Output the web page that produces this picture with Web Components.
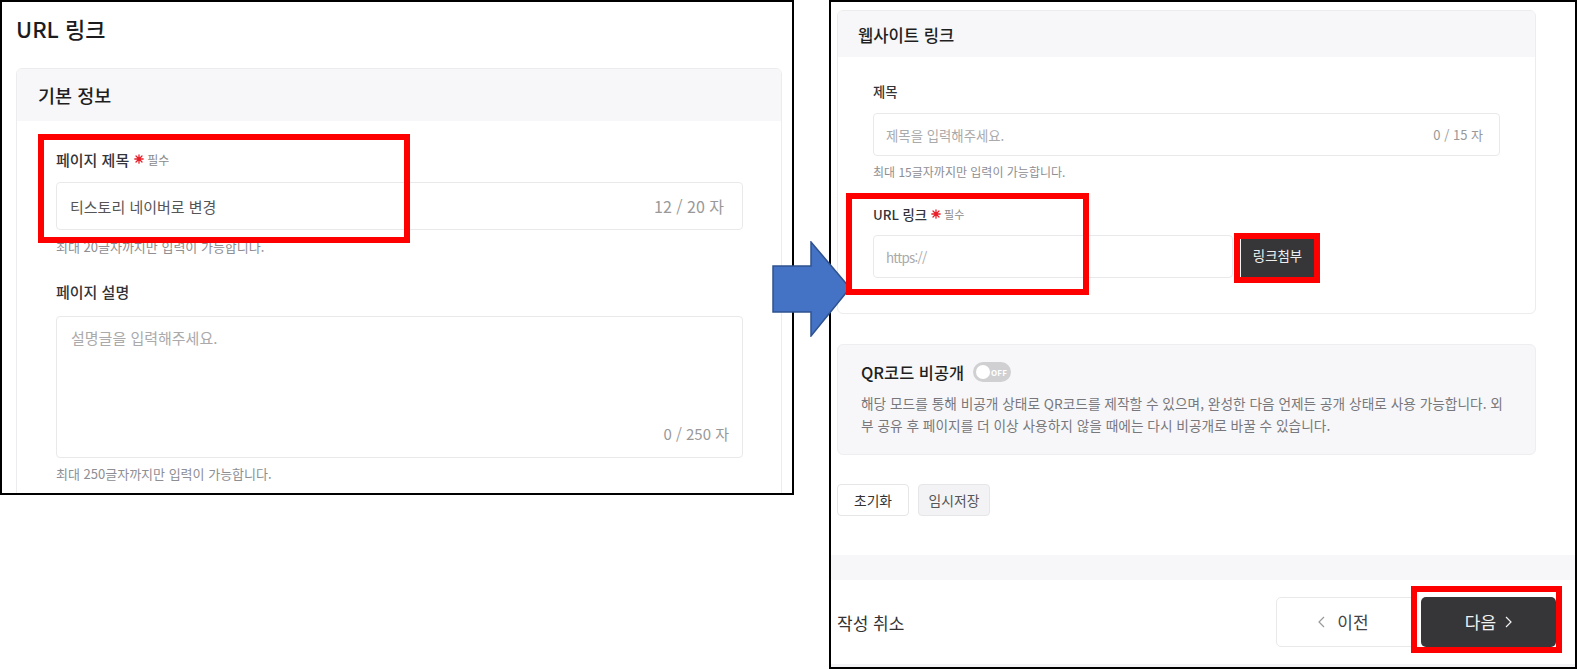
<!DOCTYPE html>
<html lang="ko"><head><meta charset="utf-8"><title>URL 링크</title>
<style>
html,body{margin:0;padding:0;background:#fff}
body{font-family:"Noto Sans CJK KR","Noto Sans",sans-serif;color:#333}
</style></head><body>
<x-canvas>
  <x-window style="--x:0px;--y:0px;--w:794px;--h:495px;--label:15px;--label-h:22px;--label-gap:12px;--text:15px;--hint:13px;--hint-gap:8px;--hint-h:18px;--req:12px;--req-ml:5px;">
    <x-page-title>URL 링크</x-page-title>
    <x-card heading="기본 정보" style="--mx:0 10px 0 14px;--head-h:52px;--head-size:18.5px;--head-pad:21px;--body-pad:27px 38px 20px 39px;--field-gap:24px;--mt:26px;">
      <x-field label="페이지 제목" required>
        <x-input value="티스토리 네이버로 변경" count="12 / 20 자" style="--h:48px;--cr:18px;--count:16px;"></x-input>
        <x-hint>최대 20글자까지만 입력이 가능합니다.</x-hint>
      </x-field>
      <x-field label="페이지 설명" style="--label-gap:14px;--hint-gap:7px;">
        <x-input multiline placeholder="설명글을 입력해주세요." count="0 / 250 자" style="--h:142px;--cr:13px;--count:15px;--mb:13px;"></x-input>
        <x-hint>최대 250글자까지만 입력이 가능합니다.</x-hint>
      </x-field>
    </x-card>
  </x-window>

  <x-window style="--x:829px;--y:0px;--w:748px;--h:669px;--label:13.3px;--label-h:20px;--label-gap:12px;--text:13.4px;--hint:12px;--hint-gap:8px;--hint-h:16px;--req:11px;--req-ml:4px;">
    <x-card heading="웹사이트 링크" style="--mx:0 39px 0 6px;--head-h:46px;--head-size:16.6px;--head-pad:20px;--head-pt:1px;--body-pad:24px 35px 35px 35px;--field-gap:24px;--mt:8px;">
      <x-field label="제목">
        <x-input placeholder="제목을 입력해주세요." count="0 / 15 자" style="--h:43px;--cr:16px;--pl:12px;"></x-input>
        <x-hint>최대 15글자까지만 입력이 가능합니다.</x-hint>
      </x-field>
      <x-field label="URL 링크" required style="--label-gap:11px;">
        <x-input-row>
          <x-input placeholder="https://" style="--h:43px;--pl:12px;--ph-track:-.8px;"></x-input>
          <x-btn variant="attach">링크첨부</x-btn>
        </x-input-row>
      </x-field>
    </x-card>
    <x-notice heading="QR코드 비공개">해당 모드를 통해 비공개 상태로 QR코드를 제작할 수 있으며, 완성한 다음 언제든 공개 상태로 사용 가능합니다. 외<br>부 공유 후 페이지를 더 이상 사용하지 않을 때에는 다시 비공개로 바꿀 수 있습니다.</x-notice>
    <x-actions>
      <x-btn variant="plain">초기화</x-btn>
      <x-btn variant="muted">임시저장</x-btn>
    </x-actions>
    <x-footer>
      <span slot="start">작성 취소</span>
      <x-btn variant="prev" slot="end" icon="left">이전</x-btn>
      <x-btn variant="next" slot="end" icon="right">다음</x-btn>
    </x-footer>
  </x-window>

  <x-arrow></x-arrow>
  <x-annot style="--x:38px;--y:134px;--w:372px;--h:109px;"></x-annot>
  <x-annot style="--x:846px;--y:193px;--w:243px;--h:102px;"></x-annot>
  <x-annot style="--x:1234px;--y:233px;--w:86px;--h:50px;"></x-annot>
  <x-annot style="--x:1411px;--y:586px;--w:151px;--h:67px;"></x-annot>
</x-canvas>

<script>
function def(name, html, init){
  customElements.define(name, class extends HTMLElement{
    constructor(){super();this.attachShadow({mode:'open'}).innerHTML=html;}
    connectedCallback(){ if(init) init.call(this,this.shadowRoot); }
  });
}
def('x-canvas',`<style>:host{display:block;position:relative;width:1577px;height:669px;overflow:hidden;background:#fff}</style><slot></slot>`);
def('x-window',`<style>:host{display:flex;flex-direction:column;position:absolute;left:var(--x);top:var(--y);width:var(--w);height:var(--h);box-sizing:border-box;border:2px solid #000;overflow:hidden;background:#fff}</style><slot></slot>`);
def('x-page-title',`<style>:host{display:block;margin:12px 0 0 14px;height:28px;line-height:28px;font-size:22px;font-weight:500;color:#1c1c1e}</style><slot></slot>`);
def('x-card',`<style>
:host{display:block;flex:none;margin:var(--mt) 0 0 0;box-sizing:border-box}
.c{margin:var(--mx);border:1px solid #ececee;border-radius:6px;overflow:hidden;background:#fff}
.h{box-sizing:border-box;height:var(--head-h);line-height:var(--head-h);padding-left:var(--head-pad);padding-top:var(--head-pt,0);background:#f7f7f9;font-size:var(--head-size);font-weight:500;color:#1f1f22}
.b{display:flex;flex-direction:column;gap:var(--field-gap);padding:var(--body-pad)}
</style><div class="c"><div class="h"></div><div class="b"><slot></slot></div></div>`,function(r){r.querySelector('.h').textContent=this.getAttribute('heading')});
def('x-field',`<style>
:host{display:block}
.l{display:flex;align-items:center;height:var(--label-h);margin-bottom:var(--label-gap);font-size:var(--label);font-weight:500;color:#333338}
.r{display:none;align-items:center;margin-left:var(--req-ml);font-size:var(--req);font-weight:400;color:#8a8a8a;gap:3px}
:host([required]) .r{display:inline-flex}
svg{width:10px;height:10px}
</style><div class="l"><span class="t"></span><span class="r"><svg viewBox="0 0 10 10" stroke="#e8202a" stroke-width="1.3" stroke-linecap="round"><path d="M5 .8V9.2M.8 5H9.2M2 2L8 8M8 2L2 8"/></svg><span>필수</span></span></div><slot></slot>`,function(r){r.querySelector('.t').textContent=this.getAttribute('label')});
def('x-input',`<style>
:host{display:flex;flex:1;box-sizing:border-box;height:var(--h);align-items:center;justify-content:space-between;padding:0 var(--cr,14px) 0 var(--pl,13px);border:1px solid #e9e9eb;border-radius:4px;background:#fff;font-size:var(--text);color:#555}
:host([multiline]){flex-direction:column;align-items:stretch;padding:10px var(--cr,14px) var(--mb,9px) 14px}
.ph{color:#aaa;letter-spacing:var(--ph-track,0)}.n{color:#999;font-size:var(--count,13px)}
:host([multiline]) .n{align-self:flex-end}
</style><span class="v"></span><span class="n"></span>`,function(r){
  const v=r.querySelector('.v'),n=r.querySelector('.n');
  const val=this.getAttribute('value');
  if(val){v.textContent=val}else{v.textContent=this.getAttribute('placeholder')||'';v.classList.add('ph')}
  n.textContent=this.getAttribute('count')||'';
});
def('x-input-row',`<style>:host{display:flex;gap:8px;margin-right:186px}</style><slot></slot>`);
def('x-hint',`<style>:host{display:block;margin-top:var(--hint-gap);height:var(--hint-h);line-height:var(--hint-h);font-size:var(--hint);color:#8e8e93}</style><slot></slot>`);
def('x-toggle',`<style>
:host{display:inline-flex;position:relative;align-items:center;justify-content:flex-end;box-sizing:border-box;width:38px;height:20px;padding-right:4px;border-radius:10px;background:#d0d0d2;color:#fff;font-size:8px;font-weight:700;letter-spacing:.2px}
i{position:absolute;left:3px;top:3px;width:14px;height:14px;border-radius:50%;background:#fff}
</style><i></i><span>OFF</span>`);
def('x-notice',`<style>
:host{display:block;flex:none;box-sizing:border-box;height:111px;margin:30px 39px 0 6px;padding:15px 20px 0 23px;border:1px solid #eeeef0;border-radius:6px;background:#f7f7f9}
.t{display:flex;align-items:center;gap:9px;height:24px;font-size:16.4px;font-weight:500;color:#1f1f22}
.d{margin-top:9px;font-size:13.7px;line-height:21.5px;color:#77777c;white-space:nowrap}
</style><div class="t"><span class="h"></span><x-toggle></x-toggle></div><div class="d"><slot></slot></div>`,function(r){r.querySelector('.h').textContent=this.getAttribute('heading')});
def('x-actions',`<style>:host{display:flex;flex:none;gap:9px;margin:29px 0 0 6px}</style><slot></slot>`);
def('x-btn',`<style>
:host{display:inline-flex;box-sizing:border-box;align-items:center;justify-content:center;gap:9px;flex:none}
:host([variant=attach]){width:73px;height:43px;padding-bottom:2px;background:#363638;color:#eee;font-size:13.4px;border-radius:0}
:host([variant=plain]),:host([variant=muted]){width:72px;height:32px;border:1px solid #e6e6e8;border-radius:4px;font-size:13.8px;color:#333}
:host([variant=muted]){background:#f3f3f5;color:#555}
:host([variant=prev]),:host([variant=next]){height:50px;border-radius:5px;font-size:17px}
:host([variant=prev]){width:141px;padding-right:6px;border:1px solid #e9e9eb;color:#444;background:#fff}
:host([variant=next]){width:135px;background:#363638;color:#f2f2f2}
svg{width:7px;height:14px;fill:none;stroke:currentColor;stroke-width:1.2;display:none}
:host([icon]) svg{display:block}
:host([icon=left]) svg{stroke:#999;margin-right:3px}
:host([icon=right]) .s{order:1}
:host([icon=right]) svg{order:2}
.s{display:block;margin-top:-1px}
</style><svg viewBox="0 0 7 14"><path class="p"/></svg><span class="s"><slot></slot></span>`,function(r){
  const ic=this.getAttribute('icon');
  if(ic) r.querySelector('.p').setAttribute('d',ic==='left'?'M6 2L1 7L6 12':'M1 2L6 7L1 12');
});
def('x-footer',`<style>
:host{display:flex;flex:none;flex-direction:column;margin-top:39px}
.band{height:25px;background:#f7f7f9}
.row{display:flex;align-items:center;justify-content:space-between;height:84px;padding:0 19px 0 6px;box-sizing:border-box;font-size:17px;color:#333}
.end{display:flex;gap:4px}
.tail{height:5px;background:#f3f3f5}
</style><div class="band"></div><div class="row"><slot name="start"></slot><div class="end"><slot name="end"></slot></div></div><div class="tail"></div>`);
def('x-arrow',`<style>:host{position:absolute;left:772px;top:241px;width:80px;height:96px;display:block}svg{display:block}</style>
<svg width="80" height="96" viewBox="0 0 80 96"><path d="M1 25H39V1L78 47L39 95V71H1Z" fill="#4472c4" stroke="#2f528f" stroke-width="1.5"/></svg>`);
def('x-annot',`<style>:host{position:absolute;left:var(--x);top:var(--y);width:var(--w);height:var(--h);box-sizing:border-box;border:6px solid #f00;display:block}</style>`);
</script>
</body></html>
